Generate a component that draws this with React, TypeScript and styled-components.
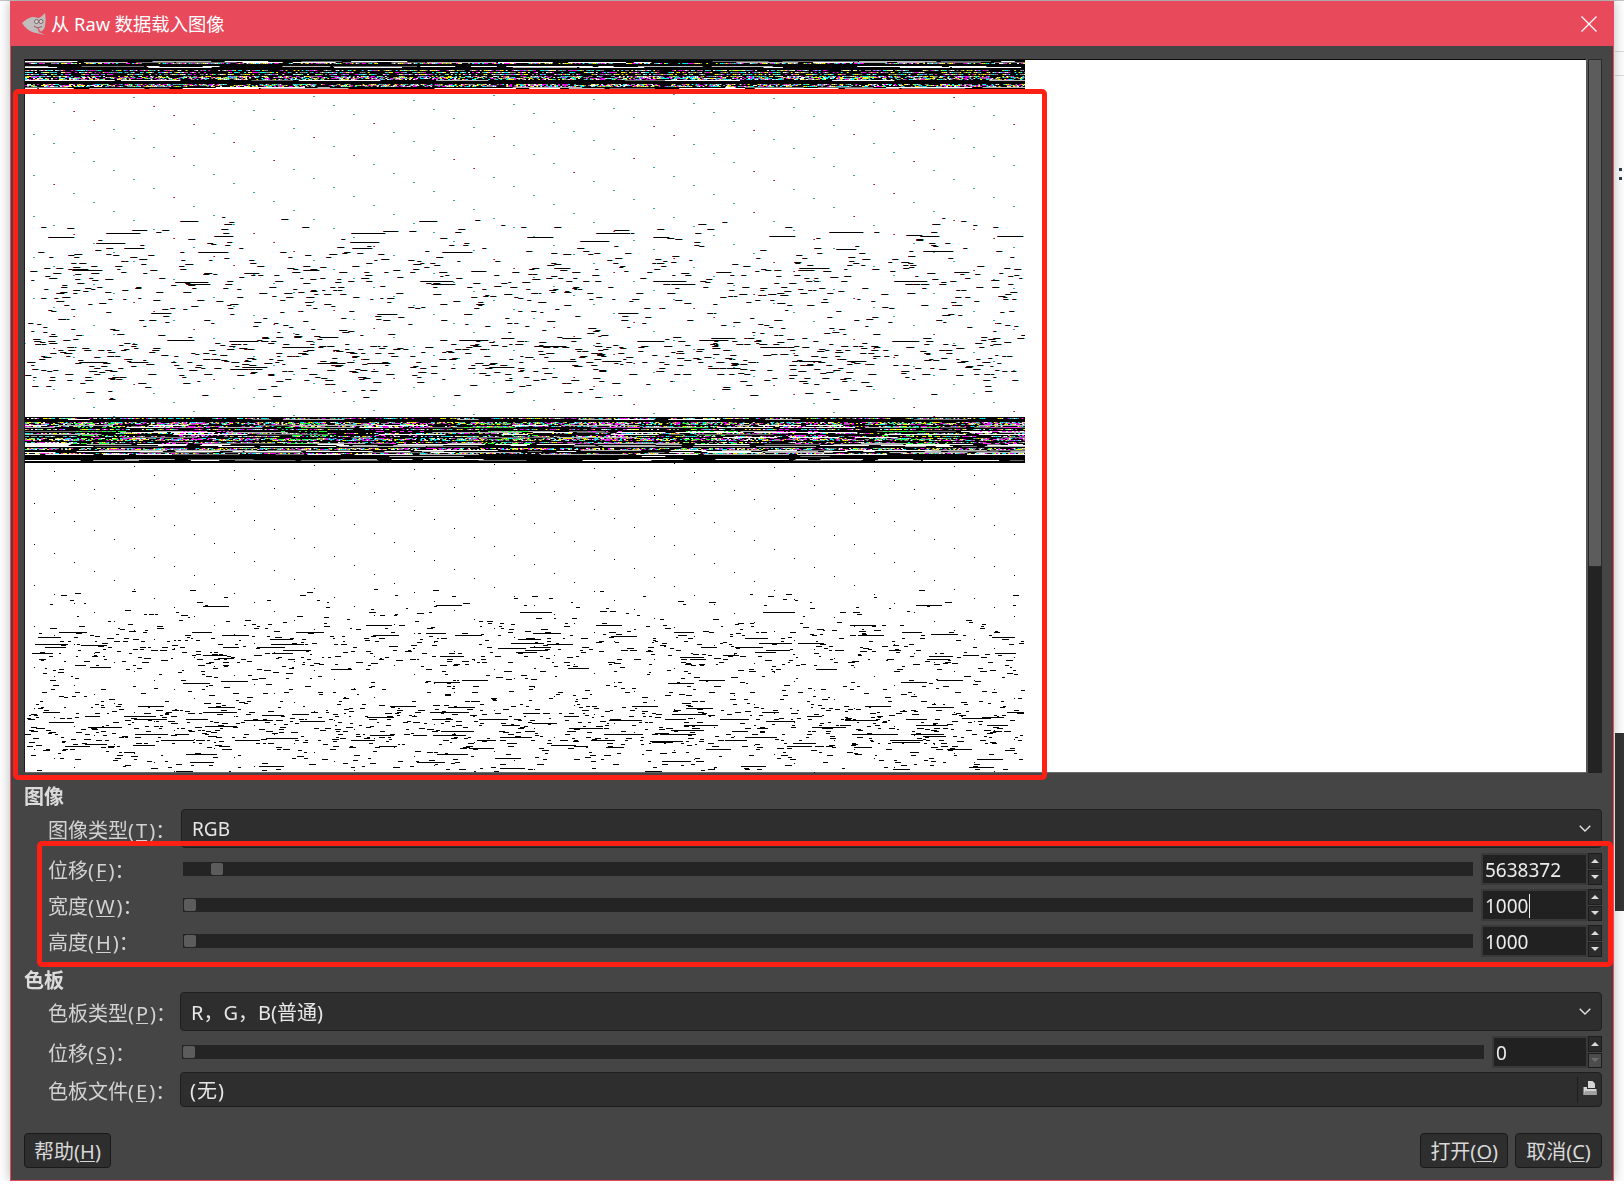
import { useEffect, useRef } from "react";
import styled, { createGlobalStyle } from "styled-components";

const GlobalStyle = createGlobalStyle`
  html, body {
    margin: 0;
    padding: 0;
    background: #fff;
  }
  body {
    font-family: "Noto Sans", "Noto Sans CJK SC", sans-serif;
  }
`;

const IMAGE_WIDTH = 1001;
const IMAGE_HEIGHT = 713;

function makeRandom(seed: number) {
  let state = seed;
  return () => {
    state = (state + 0x6d2b79f5) | 0;
    let t = Math.imul(state ^ (state >>> 15), 1 | state);
    t = (t + Math.imul(t ^ (t >>> 7), 61 | t)) ^ t;
    return ((t ^ (t >>> 14)) >>> 0) / 4294967296;
  };
}

function lerpTable(table: number[][], y: number) {
  for (let i = 1; i < table.length; i++) {
    if (y <= table[i][0]) {
      const [y0, v0] = table[i - 1];
      const [y1, v1] = table[i];
      return v0 + ((v1 - v0) * (y - y0)) / (y1 - y0);
    }
  }
  return table[table.length - 1][1];
}

function paintBand(ctx: CanvasRenderingContext2D, y0: number, y1: number, seed: number, dark: number, tinted: boolean) {
  const rng = makeRandom(seed);
  const dither = ["#ff00ff", "#00ffff", "#ffff00", "#ffffff", "#000000", "#000000", "#909090"];
  const middle = (y0 + y1) / 2;
  ctx.fillStyle = "#000";
  ctx.fillRect(0, y0, IMAGE_WIDTH - 1, y1 - y0);
  for (let y = y0 + 1; y < y1 - 1; y += 1) {
    const mode = rng();
    const blackChance = dark + 0.15 * (1 - Math.abs(y - middle) / ((y1 - y0) / 2));
    if (mode < blackChance) continue;
    let x = 0;
    const isDither = mode > 0.68;
    while (x < IMAGE_WIDTH - 1) {
      const run = 10 + rng() * 80;
      if (isDither) {
        for (let px = x; px < x + run; px += 2) {
          ctx.fillStyle = dither[Math.floor(rng() * dither.length)];
          ctx.fillRect(px, y, 2, 1);
        }
      } else if (rng() > 0.35) {
        const shade = rng();
        ctx.fillStyle = shade > 0.55 ? "#ffffff" : shade > 0.25 ? "#b8b8b8" : "#707070";
        ctx.fillRect(x, y, run, 1);
      }
      x += run + rng() * 16;
    }
  }
  if (tinted) {
    // 彩色条纹, 绿和紫交替, 只占上半部分的几行
    for (let patch = 0; patch < 10; patch++) {
      const cx = 70 + patch * 102;
      const color = patch % 2 === 0 ? "#20ff30" : "#ff30ff";
      for (let y = y0 + 6; y < y0 + 30; y += 4) {
        const offset = (rng() - 0.5) * 30;
        for (let px = cx - 26 + offset; px < cx + 26 + offset; px += 2) {
          if (rng() > 0.42) continue;
          ctx.fillStyle = color;
          ctx.fillRect(Math.round(px), y, 2, 1);
        }
      }
    }
  }
}

function paintDashes(ctx: CanvasRenderingContext2D, table: number[][], seed: number, fringe: boolean) {
  const rng = makeRandom(seed);
  const from = table[0][0];
  const to = table[table.length - 1][0];
  const tile = 240;
  const longChance = fringe ? 0.06 : 0.09;
  for (let y = from; y < to; y += 3) {
    const perTile = (lerpTable(table, y) * tile) / 1000;
    const count = Math.floor(perTile) + (rng() < perTile % 1 ? 1 : 0);
    for (let k = 0; k < count; k++) {
      const x = rng() * tile;
      const long = rng() < longChance;
      const width = Math.round(long ? 14 + rng() * 20 : 2 + rng() * 5);
      for (let t = 0; t < 5; t++) {
        if (rng() > 0.72) continue;
        const dx = Math.round(t * tile + x + (rng() - 0.5) * 16);
        const dy = y + Math.round(rng() * 2 - 1);
        if (dx + width > IMAGE_WIDTH - 1) continue;
        ctx.fillStyle = "#000";
        ctx.fillRect(dx, dy, width, 1);
        if (fringe) {
          ctx.fillStyle = "#e00000";
          ctx.fillRect(dx - 1, dy, 1, 1);
          ctx.fillStyle = "#00d8e0";
          ctx.fillRect(dx + width, dy, 1, 1);
        }
      }
    }
  }
}

function paintLattice(ctx: CanvasRenderingContext2D, y0: number, y1: number, seed: number, tinted: boolean) {
  const rng = makeRandom(seed);
  for (let i = 0; 9 + i * 20 < IMAGE_WIDTH - 1; i++) {
    const x = 9 + i * 20;
    const start = (74 + 9 * i) % 41;
    for (let y = start; y < IMAGE_HEIGHT; y += 41) {
      if (y < y0 || y >= y1) continue;
      if (tinted) {
        ctx.fillStyle = rng() < 0.25 ? "#e00000" : "#00c8d0";
        ctx.fillRect(x, y, 1, 1);
        ctx.fillStyle = "#7a7a7a";
        ctx.fillRect(x - 1, y, 1, 1);
      } else {
        ctx.fillStyle = "#000";
        ctx.fillRect(x, y, 1, 1);
      }
    }
  }
}

function RawPreview() {
  const canvasRef = useRef<HTMLCanvasElement>(null);

  useEffect(() => {
    const ctx = canvasRef.current?.getContext("2d");
    if (!ctx) return;
    // y 座标都相对图像顶部 (屏幕 y - 60)
    paintBand(ctx, 0, 30, 11, 0.24, false);
    paintLattice(ctx, 30, 357, 21, true);
    paintDashes(
      ctx,
      [[158, 8], [190, 14], [205, 36], [232, 38], [250, 16], [272, 18], [285, 58], [305, 60], [325, 18], [340, 6]],
      31,
      true,
    );
    paintBand(ctx, 357, 403, 41, 0.24, true);
    paintLattice(ctx, 403, IMAGE_HEIGHT, 51, false);
    paintDashes(
      ctx,
      [[530, 8], [560, 18], [575, 54], [600, 60], [615, 24], [640, 28], [650, 76], [680, 84], [695, 34], [713, 26]],
      61,
      false,
    );
  }, []);

  return <ImageCanvas ref={canvasRef} width={IMAGE_WIDTH - 1} height={IMAGE_HEIGHT} />;
}

function WilberIcon() {
  return (
    <svg width="24" height="22" viewBox="0 0 24 22">
      <path
        d="M0 10C3 7 6 5 10 4C13 3.5 15 5 17 5C19 4 21 2 23 0C23.6 4 24 8 23 12C23 16 20 19 17 19L23 22L14 20C8 19 3 15 0 10Z"
        fill="#c2bcbc"
      />
      <circle cx="14.5" cy="8.5" r="2" fill="#d8d4d4" stroke="#6e5a5a" strokeWidth="0.9" />
      <circle cx="19" cy="8.5" r="2" fill="#d8d4d4" stroke="#6e5a5a" strokeWidth="0.9" />
      <path d="M12 13C14 15 17 15 20 13.5" stroke="#8a5a5e" strokeWidth="1" fill="none" />
      <path d="M16 14L19 19L17 19.5L15 14.6Z" fill="#d8606e" />
    </svg>
  );
}

function CloseIcon() {
  return (
    <svg width="16" height="16" viewBox="0 0 16 16">
      <path d="M0.5 0.5L15.5 15.5M15.5 0.5L0.5 15.5" stroke="#fff" strokeWidth="1.3" />
    </svg>
  );
}

function Chevron() {
  return (
    <svg width="12" height="7" viewBox="0 0 12 7">
      <path d="M0.7 0.7L6 6L11.3 0.7" stroke="#e4e4e4" strokeWidth="1.3" fill="none" />
    </svg>
  );
}

function FileIcon() {
  return (
    <svg width="14" height="15" viewBox="0 0 14 15">
      <path d="M5 0H9.5L12 2.5V7H5Z" fill="#d4d4d4" />
      <path d="M0.5 6H4V8H13.5V14H0.5Z" fill="#d4d4d4" />
      <path d="M0.5 14L2 10H13.5V14Z" fill="#a0a0a0" />
    </svg>
  );
}

function SpinButton({ value, caret, disabledDown }: { value: string; caret?: boolean; disabledDown?: boolean }) {
  return (
    <Spin>
      <SpinField>
        {value}
        {caret && <Caret />}
      </SpinField>
      <SpinArrows>
        <SpinArrow>
          <svg width="8" height="4" viewBox="0 0 8 4">
            <path d="M4 0L8 4H0Z" fill="#dcdcdc" />
          </svg>
        </SpinArrow>
        <SpinArrow $disabled={disabledDown}>
          <svg width="8" height="4" viewBox="0 0 8 4">
            <path d="M0 0H8L4 4Z" fill={disabledDown ? "#6e6e6e" : "#dcdcdc"} />
          </svg>
        </SpinArrow>
      </SpinArrows>
    </Spin>
  );
}

function SliderRow({ label, thumb, value, caret, disabledDown, narrow }: {
  label: React.ReactNode;
  thumb: number;
  value: string;
  caret?: boolean;
  disabledDown?: boolean;
  narrow?: boolean;
}) {
  return (
    <FormRow $labelWidth={narrow ? 156 : 157} $height={32}>
      <Label>{label}</Label>
      <SliderBox>
        <Track>
          <Thumb $offset={thumb} />
        </Track>
        <SpinSlot $width={narrow ? 110 : 121}>
          <SpinButton value={value} caret={caret} disabledDown={disabledDown} />
        </SpinSlot>
      </SliderBox>
    </FormRow>
  );
}

export default function App() {
  return (
    <>
      <GlobalStyle />
      <Behind>
        <BehindLine $top={50} />
        <BehindLine $top={74} />
        <BehindDot $top={167} />
        <BehindDot $top={176} />
        <BehindPanel />
      </Behind>
      <Window>
        <TitleBar>
          <TitleLeft>
            <WilberIcon />
            <TitleText>从 Raw 数据载入图像</TitleText>
          </TitleLeft>
          <CloseIcon />
        </TitleBar>

        <Content>
          <PreviewRow>
            <Preview>
              <RawPreview />
            </Preview>
            <ScrollBar>
              <ScrollThumb />
            </ScrollBar>
          </PreviewRow>

          <SectionTitle $height={36} $line={24}>图像</SectionTitle>
          <FormRow $labelWidth={157} $height={39}>
            <Label $selectLabel>
              图像类型(<u>T</u>)：
            </Label>
            <SelectBox $size={19}>
              <span>RGB</span>
              <Chevron />
            </SelectBox>
          </FormRow>

          <SliderGroup>
            <SliderRow label={<>位移(<u>F</u>)：</>} thumb={28} value="5638372" />
            <SliderRow label={<>宽度(<u>W</u>)：</>} thumb={1} value="1000" caret />
            <SliderRow label={<>高度(<u>H</u>)：</>} thumb={1} value="1000" />
          </SliderGroup>

          <SectionTitle $height={35} $line={22}>色板</SectionTitle>
          <FormRow $labelWidth={156} $height={39}>
            <Label $selectLabel>
              色板类型(<u>P</u>)：
            </Label>
            <SelectBox $size={20}>
              <PaletteText>R，G，B(普通)</PaletteText>
              <Chevron />
            </SelectBox>
          </FormRow>

          <SliderGroup>
            <SliderRow label={<>位移(<u>S</u>)：</>} thumb={1} value="0" disabledDown narrow />
          </SliderGroup>

          <FormRow $labelWidth={156} $height={35} $gapTop={4}>
            <Label $selectLabel>
              色板文件(<u>E</u>)：
            </Label>
            <FileBox $size={20}>
              <FileText>(无)</FileText>
              <FileAction>
                <FileIcon />
              </FileAction>
            </FileBox>
          </FormRow>

          <Footer>
            <DialogButton>
              帮助(<u>H</u>)
            </DialogButton>
            <FooterRight>
              <DialogButton>
                打开(<u>O</u>)
              </DialogButton>
              <DialogButton>
                取消(<u>C</u>)
              </DialogButton>
            </FooterRight>
          </Footer>
        </Content>

        <Annotation $left={2} $top={88} $width={1034} $height={691} />
        <Annotation $left={26} $top={840} $width={1576} $height={126} />
      </Window>
    </>
  );
}

const Behind = styled.div`
  position: absolute;
  inset: 0;
  width: 1624px;
  height: 1191px;
  overflow: hidden;
  border-top: 1px solid #c4c4c4;
  box-sizing: border-box;
`;

const BehindLine = styled.div<{ $top: number }>`
  position: absolute;
  left: 1615px;
  right: 0;
  top: ${({ $top }) => $top}px;
  height: 1px;
  background: #dcdcdc;
`;

const BehindDot = styled.div<{ $top: number }>`
  position: absolute;
  left: 1619px;
  top: ${({ $top }) => $top}px;
  width: 3px;
  height: 3px;
  background: #2a3a4a;
`;

const BehindPanel = styled.div`
  position: absolute;
  left: 1615px;
  right: 0;
  top: 732px;
  height: 178px;
  background: #343434;
`;

const Window = styled.div`
  position: relative;
  display: flex;
  flex-direction: column;
  box-sizing: border-box;
  width: 1604px;
  height: 1180px;
  margin: 1px 0 0 10px;
  border: 1px solid #e84a5c;
  border-top: none;
  background: #454545;
  box-shadow: 0 0 12px rgba(0, 0, 0, 0.28);
`;

const TitleBar = styled.div`
  flex: none;
  display: flex;
  align-items: center;
  justify-content: space-between;
  height: 45px;
  margin: 0 -1px;
  padding: 0 17px 0 12px;
  background: #e84a5c;
`;

const TitleLeft = styled.div`
  display: flex;
  align-items: center;
  gap: 5px;
`;

const TitleText = styled.span`
  color: #fff;
  font-size: 18.3px;
  line-height: 24px;
`;

const Content = styled.div`
  flex: 1;
  display: flex;
  flex-direction: column;
  padding: 13px 11px 12px 13px;
  min-height: 0;
`;

const PreviewRow = styled.div`
  flex: none;
  display: flex;
  height: 714px;
  gap: 2px;
`;

const Preview = styled.div`
  flex: 1;
  box-sizing: border-box;
  background: #fff;
  border-top: 1px solid #0c0c0c;
  border-left: 1px solid #1c1c1c;
  border-bottom: 1px solid #6a6a6a;
`;

const ImageCanvas = styled.canvas`
  display: block;
`;

const ScrollBar = styled.div`
  flex: none;
  width: 14px;
  background: #232323;
  box-shadow: -2px 0 0 #555;
`;

const ScrollThumb = styled.div`
  box-sizing: border-box;
  height: 508px;
  background: #5c5c5c;
  border: 1px solid #2a2a2a;
  border-radius: 0 0 2px 2px;
`;

const SectionTitle = styled.div<{ $height: number; $line: number }>`
  flex: none;
  box-sizing: border-box;
  display: flex;
  align-items: flex-end;
  height: ${({ $height }) => $height}px;
  color: #dcdcdc;
  font-size: 20px;
  font-weight: 700;
  line-height: ${({ $line }) => $line}px;
`;

const FormRow = styled.div<{ $labelWidth: number; $height: number; $gapTop?: number }>`
  flex: none;
  display: grid;
  grid-template-columns: ${({ $labelWidth }) => $labelWidth}px 1fr;
  align-items: center;
  height: ${({ $height }) => $height}px;
  margin-top: ${({ $gapTop }) => $gapTop ?? 0}px;
`;

const Label = styled.label<{ $selectLabel?: boolean }>`
  padding: ${({ $selectLabel }) => ($selectLabel ? "5px" : "3px")} 0 0 24px;
  color: #d2d2d2;
  font-size: 20px;
  line-height: 24px;
  white-space: nowrap;

  u {
    margin: 0 2px;
    text-underline-offset: 2px;
    text-decoration-thickness: 1px;
  }
`;

const SliderGroup = styled.div`
  flex: none;
  display: flex;
  flex-direction: column;
  gap: 4px;
  margin-top: 5px;
`;

const SliderBox = styled.div`
  display: flex;
  align-items: center;
  gap: 8px;
  padding-left: 2px;
`;

const Track = styled.div`
  flex: 1;
  display: flex;
  align-items: center;
  height: 14px;
  background: #242424;
`;

const Thumb = styled.div<{ $offset: number }>`
  width: 12px;
  height: 12px;
  margin-left: ${({ $offset }) => $offset}px;
  border-radius: 2px;
  background: #5c5c5c;
`;

const SpinSlot = styled.div<{ $width: number }>`
  flex: none;
  width: ${({ $width }) => $width}px;
`;

const Spin = styled.div`
  display: flex;
  height: 32px;
`;

const SpinField = styled.div`
  flex: 1;
  box-sizing: border-box;
  display: flex;
  align-items: center;
  padding: 1px 0 0 2px;
  border: 2px solid #393939;
  background: #212121;
  color: #ececec;
  font-size: 19px;
  line-height: 24px;
`;

const Caret = styled.span`
  display: inline-block;
  width: 1px;
  height: 24px;
  margin-left: 1px;
  background: #e8e8e8;
`;

const SpinArrows = styled.div`
  flex: none;
  display: flex;
  flex-direction: column;
  gap: 1px;
  width: 14px;
`;

const SpinArrow = styled.div<{ $disabled?: boolean }>`
  flex: 1;
  display: flex;
  align-items: center;
  justify-content: center;
  box-sizing: border-box;
  border: 1px solid #1c1c1c;
  background: ${({ $disabled }) => ($disabled ? "#4c4c4c" : "#2c2c2c")};
`;

const SelectBox = styled.div<{ $size: number }>`
  display: flex;
  align-items: center;
  justify-content: space-between;
  box-sizing: border-box;
  height: 100%;
  padding: 0 10px;
  border: 1px solid #1e1e1e;
  border-radius: 4px;
  background: #2e2e2e;
  color: #e6e6e6;
  font-size: ${({ $size }) => $size}px;
  line-height: 24px;
`;

const PaletteText = styled.span`
  padding-top: 2px;
`;

const FileBox = styled(SelectBox)`
  padding: 0 0 0 9px;
`;

const FileText = styled.span`
  letter-spacing: 1px;
  padding-top: 3px;
`;

const FileAction = styled.div`
  display: flex;
  align-items: center;
  justify-content: center;
  width: 24px;
  height: 26px;
  padding-bottom: 2px;
  box-sizing: border-box;
  border-left: 1px solid #1e1e1e;
`;

const Footer = styled.div`
  flex: none;
  display: flex;
  justify-content: space-between;
  margin-top: auto;
`;

const FooterRight = styled.div`
  display: flex;
  gap: 7px;
`;

const DialogButton = styled.button`
  box-sizing: border-box;
  height: 35px;
  min-width: 87px;
  padding: 2px 9px 0;
  border: 1px solid #1a1a1a;
  border-radius: 4px;
  background: #2e2e2e;
  color: #d8d8d8;
  font-family: inherit;
  font-size: 20px;
  line-height: 24px;

  u {
    text-underline-offset: 2px;
    text-decoration-thickness: 1px;
  }
`;

const Annotation = styled.div<{ $left: number; $top: number; $width: number; $height: number }>`
  position: absolute;
  left: ${({ $left }) => $left}px;
  top: ${({ $top }) => $top}px;
  width: ${({ $width }) => $width}px;
  height: ${({ $height }) => $height}px;
  box-sizing: border-box;
  border: 5px solid #ff2015;
  border-radius: 5px;
  pointer-events: none;
`;
